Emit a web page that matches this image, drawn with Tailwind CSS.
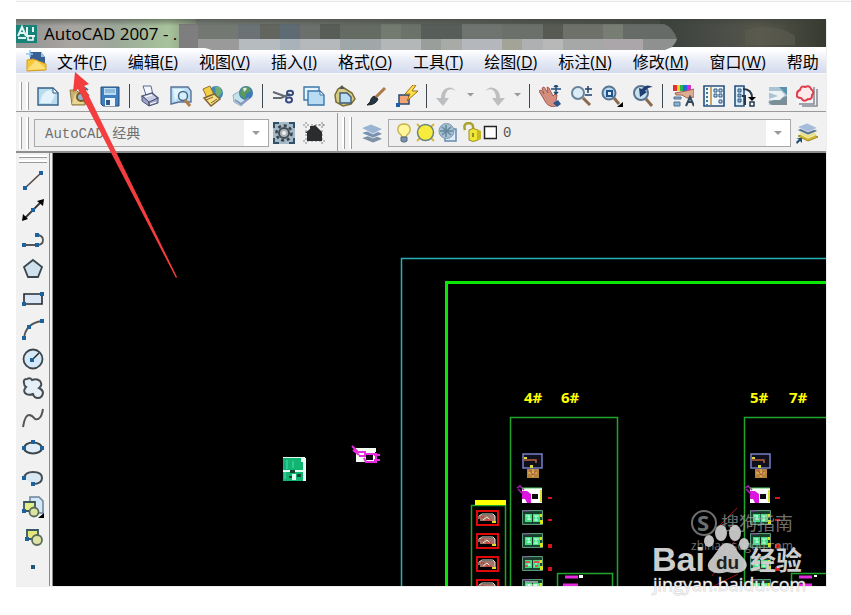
<!DOCTYPE html>
<html lang="zh-CN">
<head>
<meta charset="utf-8">
<meta name="viewport" content="width=device-width, initial-scale=1">
<title>AutoCAD 2007</title>
<script src="https://cdn.jsdelivr.net/npm/@tailwindcss/browser@4"></script>
</head>
<body class="bg-white">
<div class="flex h-screen min-h-[560px] flex-col overflow-hidden pl-4 font-['Open_Sans','Noto_Sans_CJK_SC',sans-serif] text-black">
<div class="h-0.5 shrink-0 border-b border-gray-200 bg-[#fafafa]"></div>

<main class="relative mt-[17px] mr-6 mb-7 flex min-h-0 flex-1 flex-col border-r border-b border-[#eeeeee] bg-[#f0f0f0]">

<!-- Title bar -->
<header class="relative flex h-[31px] shrink-0 items-center gap-2 overflow-hidden bg-linear-to-r from-[#8e9290] via-[#6a7068] via-40% to-[#343832] pb-px">
  <svg class="absolute inset-0 h-full w-[811px]" viewBox="16 19 811 31" aria-hidden="true">
    <defs>
      <linearGradient id="tb" x1="0" x2="1"><stop offset="0" stop-color="#8f9493"/><stop offset=".3" stop-color="#a9a4a0"/><stop offset=".55" stop-color="#9ca89a"/><stop offset=".85" stop-color="#a8c39b"/><stop offset="1" stop-color="#86907f"/></linearGradient>
      <linearGradient id="sh" x1="0" x2="0" y1="0" y2="1"><stop offset="0" stop-color="#3a4038" stop-opacity=".5"/><stop offset="1" stop-color="#3a4038" stop-opacity="0"/></linearGradient>
      <linearGradient id="dk" x1="0" x2="1"><stop offset="0" stop-color="#3b403c"/><stop offset=".35" stop-color="#4a4d47"/><stop offset=".6" stop-color="#55564a"/><stop offset="1" stop-color="#35392f"/></linearGradient>
    </defs>
    <path fill="url(#tb)" d="M16 19h180v31H16z"/>
    <path fill="url(#dk)" d="M660 19h167v31H660z"/>
    <path fill="#5e5e50" opacity=".6" d="M745 30q30-8 50 6v9h-50z"/>
    <path fill="#7d7e7d" d="M179 24h19v27h-19z"/>
    <path fill="#747873" d="M198 24h40v15h-40z"/><path fill="#999a99" d="M198 39h41v12h-41z"/>
    <path fill="#6b7275" d="M238 24h22v15h-22z"/><path fill="#62665f" d="M260 24h20v15h-20z"/><path fill="#5f6b74" d="M280 24h20v15h-20z"/><path fill="#6b706d" d="M300 24h20v15h-20z"/><path fill="#595d57" d="M320 24h20v15h-20z"/><path fill="#656a63" d="M340 24h41v15h-41z"/><path fill="#727b70" d="M381 24h20v15h-20z"/><path fill="#6c7169" d="M401 24h20v15h-20z"/><path fill="#575d59" d="M421 24h41v15h-41z"/><path fill="#707471" d="M462 24h40v15h-40z"/><path fill="#6c706b" d="M502 24h41v15h-41z"/><path fill="#565a52" d="M543 24h20v15h-20z"/><path fill="#6d716a" d="M563 24h40v15h-40z"/><path fill="#787d74" d="M603 24h20v15h-20z"/><path fill="#666b67" d="M623 24h41v15h-41z"/>
    <path fill="#b6bbc0" d="M239 39h41v12h-41z"/><path fill="#a9b2b8" d="M280 39h20v12h-20z"/><path fill="#b5b9bc" d="M300 39h40v12h-40z"/><path fill="#a0a7a9" d="M340 39h41v12h-41z"/><path fill="#b4b7b8" d="M381 39h40v12h-40z"/><path fill="#9a9e9b" d="M421 39h20v12h-20z"/><path fill="#a8aaa8" d="M441 39h21v12h-21z"/><path fill="#b4b8bc" d="M462 39h40v12h-40z"/><path fill="#a3a398" d="M502 39h20v12h-20z"/><path fill="#afb0b2" d="M522 39h21v12h-21z"/><path fill="#b9b8b8" d="M543 39h20v12h-20z"/><path fill="#a5a8a7" d="M563 39h40v12h-40z"/><path fill="#aaa6aa" d="M603 39h40v12h-40z"/><path fill="#8f9191" d="M643 39h34q-3 9-13 12h-21z"/>
    <path fill="url(#sh)" d="M16 19h811v7H16z"/>
    <path fill="#666b67" d="M664 24q9 3 13 15h-13z"/>
    <path fill="#fff" d="M16 48h189l7 2H16zM672 47h155v3H665z"/>
  </svg>
  <svg class="relative size-6 -mr-1" viewBox="0 0 24 24" aria-hidden="true"><path fill="#178278" d="M0 3h21v18H0z"/><path d="M2 14 6 5l4 9M4 11h5M11 5v9h8M17 5v5M2 16h8" stroke="#dff5f2" stroke-width="2" fill="none"/><path fill="#178278" stroke="#fff" stroke-width="1.5" d="M12 14h5v4h-5z"/></svg>
  <h1 class="relative text-[17px] leading-6">AutoCAD 2007 - .</h1>
</header>

<!-- Menu bar -->
<nav class="flex h-6 shrink-0 items-center gap-[21px] overflow-hidden bg-linear-to-b from-white via-[#e6eaf5] to-[#d5dbee] pl-2 text-base leading-6 whitespace-nowrap border-b border-[#f8f8f8]" aria-label="菜单">
  <svg class="-mr-3 size-6 shrink-0" viewBox="0 0 24 24" aria-hidden="true"><path fill="#385f94" d="M6 2h11l4 5v10H6z"/><path fill="#9fc2df" d="M17 2v5h4z"/><path fill="#f3c93a" stroke="#d69b1c" d="M3 10l6-1 13 5v6l-19 1z"/><path fill="#fbe07a" d="M3 20 12 10l10 9z"/><path stroke="#8cc7ee" stroke-width="1.5" d="M6 0v7M2 4h7"/></svg>
  <a href="#file">文件(<u>F</u>)</a><a href="#edit">编辑(<u>E</u>)</a><a href="#view">视图(<u>V</u>)</a><a href="#insert">插入(<u>I</u>)</a><a href="#format">格式(<u>O</u>)</a><a href="#tools">工具(<u>T</u>)</a><a href="#draw">绘图(<u>D</u>)</a><a href="#dim">标注(<u>N</u>)</a><a href="#modify">修改(<u>M</u>)</a><a href="#window">窗口(<u>W</u>)</a><a href="#help">帮助</a>
</nav>

<!-- Standard toolbar -->
<div class="flex h-[38px] shrink-0 items-center gap-[9px] overflow-hidden border-b border-[#9a9a9a] bg-[#f1f1f1] pt-1.5 pl-[3px] *:shrink-0" role="toolbar" aria-label="标准">
  <span class="flex h-7 gap-1 -mr-px"><i class="w-[3px] border-r border-[#9c9c9c] bg-white"></i><i class="w-[3px] border-r border-[#9c9c9c] bg-white"></i></span>
  <button aria-label="新建" class="size-[22px]"><svg viewBox="0 0 22 22"><path fill="#b9dcef" stroke="#365f86" stroke-width="1.4" d="M1 3h15l5 5v12H1z"/><path fill="#e4f3fb" d="M3 18Q4 7 13 5l5 5-4 8z"/><path fill="#f8fcff" stroke="#365f86" d="M16 3v5h5z"/></svg></button>
  <button aria-label="打开" class="size-[22px]"><svg viewBox="0 0 22 22"><path fill="#c9b173" stroke="#8d7a3f" d="M2 5h6l2 2h8l3 3-4 10H4z"/><path fill="#e9d68f" d="M7 9h13l-5 10H4z"/><path stroke="#4a7594" stroke-width="2" d="m10 4 4-3 6 4"/><circle cx="13" cy="12" r="4" fill="#8eb9cc" stroke="#765b28" stroke-width="2"/><path stroke="#6a5126" stroke-width="3" d="m16 15 4 4"/></svg></button>
  <button aria-label="保存" class="size-[22px]"><svg viewBox="0 0 22 22"><path fill="#3f7fbd" stroke="#274c78" d="M2 2h18v19H4l-2-2z"/><path fill="#b8dcf5" d="M5 3h12v7H5z"/><path stroke="#6699bb" d="M6 5h10M6 7h10"/><path fill="#eef5fa" d="M6 13h10v8H6z"/><path fill="#315a8b" d="M7 15h4v5H7z"/></svg></button>
  <i class="-ml-px h-6 w-px bg-[#3f4650]"></i>
  <button aria-label="打印" class="size-[22px]"><svg viewBox="0 0 22 22"><path fill="#f3f5ff" stroke="#606890" d="M4 1h8l2 9H7z"/><path fill="#c8cce5" stroke="#4b5273" stroke-width="1.3" d="m3 11 10-3 6 5-9 5z"/><path fill="#9da4c9" stroke="#4b5273" d="m3 11 7 6v4l-7-5zM10 17l9-4v5l-9 3z"/><path stroke="#fff" d="m6 12 7-2M11 19l6-2"/></svg></button>
  <button aria-label="打印预览" class="size-[22px]"><svg viewBox="0 0 22 22"><path fill="#b8dff6" stroke="#5b7198" stroke-width="1.4" d="M1 2h17l3 4v11H9l-8 2z"/><path fill="#e2f4fd" d="M3 4h12L5 16z"/><circle cx="13" cy="11" r="4.5" fill="#d5efff" stroke="#496689" stroke-width="1.5"/><path stroke="#b07c48" stroke-width="3" d="m15 15 5 6"/></svg></button>
  <button aria-label="发布" class="size-[22px]"><svg viewBox="0 0 22 22"><circle cx="15" cy="8" r="7" fill="#3c87bd"/><path fill="#71ae73" d="M14 2h5l2 5-4 6-2-4z"/><path fill="#f3cf46" stroke="#95742d" d="m2 4 7-3 4 9-7 3z"/><path fill="#f7e288" stroke="#826332" stroke-width="1.4" d="m3 13 10-4 6 5-9 7z"/><path stroke="#8b5c23" d="m5 15 7-3M10 18l6-4"/></svg></button>
  <button aria-label="三维 DWF" class="size-[22px]"><svg viewBox="0 0 22 22"><path fill="#c3e3ea" stroke="#8fb3c4" d="m1 10 7-4 10 7-9 8-7-4z"/><circle cx="14" cy="8" r="7" fill="#3b7cb8"/><path fill="#5d9a58" d="M9 4q7-6 10 2l-5 3-1 5-5-4z"/><path fill="#d7edf4" d="M11 3q3-1 4 1l-3 3z"/><path stroke="#8b92c0" stroke-width="2" fill="none" d="m3 15 6 4 8-6"/></svg></button>
  <i class="-ml-px h-6 w-px bg-[#3f4650]"></i>
  <button aria-label="剪切" class="size-[22px]"><svg viewBox="0 0 22 22" fill="none"><path stroke="#636a74" stroke-width="2" d="m1 7 14 5M1 13h8l9-4"/><ellipse cx="18" cy="8" rx="3" ry="2.3" stroke="#364b80" stroke-width="2"/><ellipse cx="17" cy="15" rx="3" ry="2.4" stroke="#364b80" stroke-width="2"/></svg></button>
  <button aria-label="复制" class="size-[22px]"><svg viewBox="0 0 22 22"><path fill="#e7f4ff" stroke="#3e77a9" stroke-width="1.4" d="M1 2h15v13H1z"/><path fill="#b8dcf3" stroke="#3e77a9" stroke-width="1.4" d="M5 6h12l4 4v10H5z"/><path fill="#fff" stroke="#3e77a9" d="M17 6v4h4z"/></svg></button>
  <button aria-label="粘贴" class="size-[22px]"><svg viewBox="0 0 22 22"><path fill="#d9cd83" stroke="#796f3d" stroke-width="1.5" d="M4 4 7 2l3 1 8 5 3 6-4 5-8 2-7-4-1-7z"/><path fill="#b9def1" stroke="#3f5877" stroke-width="1.4" d="M6 8h7l4 4v6H6z"/><path fill="#555" d="m5 4 3-4 3 4z"/></svg></button>
  <button aria-label="特性匹配" class="size-[22px]"><svg viewBox="0 0 22 22"><path stroke="#ad7948" stroke-width="3" d="M20 3 11 12"/><path fill="#29353e" stroke="#1c2932" d="m9 11 4 3q-2 6-11 6l3-3q1-5 4-6z"/></svg></button>
  <button aria-label="块编辑器" class="size-[22px]"><svg viewBox="0 0 22 22"><path fill="#f1a477" stroke="#284b70" stroke-width="1.5" d="M3 10h10v9H3z"/><path fill="#1b5daa" d="M0 18h4v4H0z"/><path fill="#ffe247" stroke="#a56d12" d="m17 0-8 9h5l-3 7L22 6h-6l4-6z"/></svg></button>
  <i class="-ml-px h-6 w-px bg-[#3f4650]"></i>
  <button aria-label="放弃" class="size-[22px]"><svg viewBox="0 0 22 22"><path fill="#bcbec0" d="M20 6Q15 0 9 4q-4 3-4 9H0l7 8 6-8H9q0-5 3-8 4-2 8 1z"/></svg></button>
  <button aria-label="放弃列表" class="w-[7px]"><svg viewBox="0 0 6 4"><path fill="#999" d="M0 0h6L3 3z"/></svg></button>
  <button aria-label="重做" class="size-[22px]"><svg viewBox="0 0 22 22"><path fill="#bcbec0" d="M2 6Q7 0 13 4q4 3 4 9h5l-7 8-6-8h4q0-5-3-8-4-2-8 1z"/></svg></button>
  <button aria-label="重做列表" class="w-[7px]"><svg viewBox="0 0 6 4"><path fill="#999" d="M0 0h6L3 3z"/></svg></button>
  <i class="-ml-px h-6 w-px bg-[#3f4650]"></i>
  <button aria-label="实时平移" class="size-[22px]"><svg viewBox="0 0 22 22"><path fill="#d58e7d" stroke="#a15d54" d="M0 6l2-1 3 4-2-6 2-1 4 6-1-6 2 1 4 8 2-2 2 1-1 6 3 3-5 3q-7-1-9-6z"/><path fill="#2a5689" d="m14 18 5-3 3 4-4 3z"/><path stroke="#224c7c" stroke-width="1.5" d="M17 0v9M12 4h10M15 2l2-2 2 2M15 7l2 2 2-2"/></svg></button>
  <button aria-label="实时缩放" class="size-[22px]"><svg viewBox="0 0 22 22"><circle cx="8" cy="8" r="6" fill="#dcecf6" stroke="#67849c" stroke-width="2"/><path stroke="#8b6a4d" stroke-width="3" d="m13 13 7 7"/><path stroke="#1f3f65" stroke-width="1.5" d="M18 1v7M15 4h7M15 10h7"/></svg></button>
  <button aria-label="窗口缩放" class="size-[22px]"><svg viewBox="0 0 22 22"><circle cx="8" cy="8" r="6.5" fill="#b8d9ee" stroke="#587491" stroke-width="2"/><path fill="#dcf0ff" stroke="#20538c" stroke-width="2" d="M6 6h5v5H6z"/><path stroke="#8b6a4d" stroke-width="3" d="m13 13 5 6"/><path d="M22 17v5h-6z"/></svg></button>
  <button aria-label="缩放上一个" class="size-[22px]"><svg viewBox="0 0 22 22"><circle cx="9" cy="8" r="7" fill="#c9e1ef" stroke="#587491" stroke-width="2"/><path stroke="#8b6a4d" stroke-width="3" d="m14 14 6 7"/><path fill="#203f70" d="M21 2q-7-4-11 2L7 3l1 9 7-5-2-1q3-4 8-4z"/></svg></button>
  <i class="-ml-px h-6 w-px bg-[#3f4650]"></i>
  <button aria-label="特性" class="size-[22px]"><svg viewBox="0 0 22 22"><path fill="#e42b37" d="M1 0h4v6H1z"/><path fill="#f0d126" d="M5 0h3v6H5z"/><path fill="#25b44d" d="M8 0h3v6H8z"/><path fill="#2466df" d="M11 0h4v6h-4z"/><path fill="#d62bd2" d="M15 0h4v6h-4z"/><path fill="#dfab91" stroke="#9b6250" d="m3 8 11-2 8-2v8l-7 1-5-3H4z"/><path fill="#89b0d5" stroke="#4f7294" d="M2 12h7v2H2zm0 5h6v4H2z"/><path stroke="#34485e" stroke-width="2" fill="none" d="m14 21 4-9 4 9m-6-4h5"/></svg></button>
  <button aria-label="设计中心" class="size-[22px]"><svg viewBox="0 0 22 22"><path fill="#eef7fd" stroke="#28517a" stroke-width="1.6" d="M1 1h20v20H1z"/><path stroke="#c8a85d" stroke-width="2" d="M8 2v18"/><path stroke="#4a7797" stroke-width="2" stroke-dasharray="2 2" d="M4 3v17"/><path fill="#bdd5ea" stroke="#31587e" d="M11 4h3v3h-3zm5 0h3v3h-3zm-5 5h3v3h-3zm5 0h3v3h-3zm0 6h3v3h-3z"/></svg></button>
  <button aria-label="工具选项板" class="size-[22px]"><svg viewBox="0 0 22 22"><path fill="#d9eafa" stroke="#28517a" stroke-width="1.6" d="M1 1h9v20H1z"/><path fill="#8eb5d5" stroke="#31587e" d="M4 4h3v3H4zm0 5h3v3H4zm0 5h3v3H4z"/><path fill="none" stroke="#23384d" stroke-width="2" d="M9 4q9 0 9 9M8 11h3v9"/><path d="m14 12 4 4 4-4z"/><path fill="#fff" stroke="#23384d" stroke-width="1.5" d="M16 17h4v4h-4z"/></svg></button>
  <button aria-label="图纸集管理器" class="size-[22px]"><svg viewBox="0 0 22 22"><path fill="#a9c5d3" d="M4 2h18v18H4z"/><path fill="#7b8f99" d="m3 17 19-6v9H7z"/><path fill="#edf3f4" d="M0 6h16l4 4-5 5H1l12-4z"/><path fill="#5a8fb0" d="M14 2h8v8z"/></svg></button>
  <button aria-label="标记集管理器" class="size-[22px]"><svg viewBox="0 0 22 22"><path fill="none" stroke="#838b93" stroke-width="1.5" d="M6 21h15V4M3 19h15V2"/><path fill="#f2f8fb" d="M1 2h15v15H1z"/><path fill="#fce9e9" stroke="#df3e4c" stroke-width="2" d="M4 5q1-5 5-3 5-2 6 2 4 3 1 6 0 5-4 4-4 4-7-1-5 0-4-4 0-3 3-4z"/></svg></button>
</div>

<!-- Workspace and layer toolbar -->
<div class="flex h-[41px] shrink-0 items-center gap-2 overflow-hidden border-b-2 border-[#8d8d8d] bg-[#f1f1f1] pt-[3px] pl-[3px]" role="toolbar" aria-label="图层">
  <span class="-mr-[3px] flex h-8 shrink-0 gap-1"><i class="w-[3px] border-r border-[#9c9c9c] bg-white"></i><i class="w-[3px] border-r border-[#9c9c9c] bg-white"></i></span>
  <div class="relative h-7 w-[235px] shrink-0 border border-[#a8a8a8] bg-[#efefef]">
    <select aria-label="工作空间" class="size-full appearance-none bg-transparent pl-2.5 font-['Liberation_Mono','Noto_Sans_CJK_SC',monospace] text-sm text-[#707070]"><option>AutoCAD 经典</option></select>
    <span class="pointer-events-none absolute inset-y-0 right-0 flex w-6 items-center justify-center bg-white"><svg class="w-2" viewBox="0 0 8 4" aria-hidden="true"><path fill="#999" d="M0 0h8L4 4z"/></svg></span>
  </div>
  <button aria-label="工作空间设置" class="-ml-1 size-[22px] shrink-0"><svg viewBox="0 0 22 22"><path fill="#a5b8c6" d="M0 0h22v22H0z"/><path fill="none" stroke="#31516a" stroke-width="2" d="M6 1H1v5M16 1h5v5M1 16v5h5M21 16v5h-5"/><circle cx="11" cy="11" r="7.5" fill="none" stroke="#38424b" stroke-width="2.5" stroke-dasharray="3 2.8"/><circle cx="11" cy="11" r="5" fill="#adb4b8" stroke="#424c54" stroke-width="2"/><circle cx="11" cy="11" r="2" fill="#eee"/></svg></button>
  <button aria-label="我的工作空间" class="size-[22px] shrink-0"><svg viewBox="0 0 22 22"><path stroke="#868686" stroke-dasharray="2 2" d="M0 3h22M0 19h22M3 0v22M19 0v22M15 3h7"/><path fill="#2a2c2e" d="m2 11 5-4V4h3l2-1 7 7v9H4v-8z"/></svg></button>
  <i class="ml-1 h-10 w-px shrink-0 bg-[#9a9a9a]"></i>
  <span class="-ml-1 flex h-8 shrink-0 gap-1"><i class="w-[3px] border-r border-[#9c9c9c] bg-white"></i><i class="w-[3px] border-r border-[#9c9c9c] bg-white"></i></span>
  <button aria-label="图层特性管理器" class="size-6 shrink-0"><svg viewBox="0 0 24 24"><path fill="#7e91a4" stroke="#fff" stroke-width=".7" d="m1 17 12-4 10 5-10 4z"/><path fill="#7791ae" stroke="#fff" stroke-width=".7" d="m1 12 12-4 10 5-10 4z"/><path fill="#9ab4d2" stroke="#fff" stroke-width=".7" d="M1 7 11 3l12 5-10 5z"/></svg></button>
  <div class="-ml-1 relative flex h-7 min-w-0 flex-1 items-center border border-[#a8a8a8] bg-[#efefef] pl-1">
    <svg class="h-[22px] w-[104px] shrink-0" viewBox="392 123 104 22" aria-hidden="true">
      <path fill="#fff59b" stroke="#c4b34c" stroke-width="1.4" d="M400 136q-4-3-3-7 1-4 6-4t6 4q1 4-3 7l-1 2h-4z"/><path fill="#7890ad" stroke="#57697c" d="M400 138h6v4l-2 1h-2l-2-1z"/>
      <path stroke="#d6b83b" stroke-width="2" d="m416 125 17 17M433 125l-17 17"/><circle cx="424.500" cy="133.500" r="8" fill="#f7ec3b" stroke="#6a847c" stroke-width="1.5"/>
      <path fill="#dfeafa" stroke="#658aae" stroke-width="1.5" d="M444 130h11v12h-11z"/><circle cx="445.500" cy="132" r="7.500" fill="#a7bfd0" stroke="#789aae"/><path stroke="#62879e" stroke-width="1.5" d="M445 126v12M439 132h13M441 128l9 8M450 128l-9 8"/>
      <path fill="none" stroke="#a8a22c" stroke-width="2.500" d="M464 131q-2-6 3-7 6 0 5 6v5"/><path fill="#efe438" stroke="#989024" d="M468 131q4-3 9 0v10q-5 3-9 0z"/><path fill="#c6b923" d="M476 130l4 2v8l-4 2z"/><path stroke="#77701c" stroke-width="1.500" d="M472 134v4"/>
      <path fill="#fff" stroke="#222" stroke-width="1.500" d="M483.500 127.500h12v12h-12z"/>
    </svg>
    <select aria-label="当前图层" class="h-full min-w-0 flex-1 appearance-none bg-transparent pl-1.5 font-['Liberation_Mono',monospace] text-sm text-[#555]"><option>0</option></select>
    <span class="pointer-events-none absolute inset-y-0 right-0 flex w-6 items-center justify-center bg-white"><svg class="w-2" viewBox="0 0 8 4" aria-hidden="true"><path fill="#999" d="M0 0h8L4 4z"/></svg></span>
  </div>
  <button aria-label="将对象的图层置为当前" class="-ml-1 mr-[7px] size-6 shrink-0"><svg viewBox="0 0 24 24"><path fill="#d4b92c" stroke="#9c8a28" d="m3 15 10-4 10 5-10 4z"/><path fill="#ece179" stroke="#fff" stroke-width=".6" d="m3 12 10-4 10 5-10 4z"/><path fill="#54728d" stroke="#fff" stroke-width=".6" d="m2 9 10-4 11 5-10 4z"/><path fill="#a7bcda" stroke="#fff" stroke-width=".6" d="M2 6 12 2l11 5-10 4z"/><path fill="#204d78" d="M1 17h6v5l-2-2-3 3-1-2 3-3z"/></svg></button>
</div>

<div class="flex min-h-0 flex-1">
<!-- Draw toolbar -->
<aside class="flex w-[37px] shrink-0 flex-col items-center border-r-4 border-double border-[#8b8b8b] bg-[#f1f1f1] pt-0.5 pb-2" role="toolbar" aria-label="绘图">
  <div class="flex w-7 flex-col gap-0.5"><i class="h-[3px] border-b border-[#999] bg-white"></i><i class="h-[3px] border-b border-[#999] bg-white"></i></div>
  <div class="mt-1.5 flex min-h-0 flex-1 flex-col justify-between *:size-[22px]">
  <button aria-label="直线"><svg viewBox="0 0 22 22"><path stroke="#554b44" stroke-width="1.6" d="M3 19 19 4"/><path fill="#1d629c" d="M1 17h4v4H1zM17 2h4v4h-4z"/></svg></button>
  <button aria-label="构造线"><svg viewBox="0 0 22 22"><path stroke="#333" stroke-width="1.8" d="M2 20 20 2"/><path d="m0 22 1-7 5 5zM22 0l-1 7-6-5z"/><path fill="#1d629c" d="M9 9h4v4H9z"/></svg></button>
  <button aria-label="多段线"><svg viewBox="0 0 22 22"><path fill="none" stroke="#555" stroke-width="1.8" d="M2 16h13q6 0 6-5t-7-5"/><path fill="#1d629c" d="M0 14h4v4H0zM13 14h4v4h-4zM13 4h4v4h-4z"/></svg></button>
  <button aria-label="正多边形"><svg viewBox="0 0 22 22"><path fill="#cfe1ec" stroke="#3b454c" stroke-width="1.8" d="m11 2 9 7-4 10H6L2 9z"/></svg></button>
  <button aria-label="矩形"><svg viewBox="0 0 22 22"><path fill="#dce7f5" stroke="#252a30" stroke-width="1.6" d="M2 6h18v10H2z"/><path fill="#1d629c" d="M0 14h4v4H0zM18 4h4v4h-4z"/></svg></button>
  <button aria-label="圆弧"><svg viewBox="0 0 22 22"><path fill="none" stroke="#555" stroke-width="1.8" d="M2 20Q4 5 20 3"/><path fill="#1d629c" d="M0 18h4v4H0zM5 7h4v4H5zM18 1h4v4h-4z"/></svg></button>
  <button aria-label="圆"><svg viewBox="0 0 22 22"><circle cx="11" cy="11" r="9.500" fill="#d5e8f9" stroke="#3b454c" stroke-width="1.8"/><path stroke="#222" stroke-width="1.500" d="m10 12 7-7"/><path fill="#1d629c" d="M8 10h4v4H8z"/></svg></button>
  <button aria-label="修订云线"><svg viewBox="0 0 22 22"><path fill="#e5eff7" stroke="#454d53" stroke-width="2" d="M2 6q-1-4 3-4 3-2 5 1 5-2 8 1 3 4-1 7 4 2 4 5-1 5-5 5-4 0-5-4-5 2-8-1-2-3 1-6-2-1-2-4z"/></svg></button>
  <button aria-label="样条曲线"><svg viewBox="0 0 22 22"><path fill="none" stroke="#555" stroke-width="2" d="M1 20Q3 8 7 8q3 0 6 4 6 2 8-10"/></svg></button>
  <button aria-label="椭圆"><svg viewBox="0 0 22 22"><ellipse cx="11" cy="11" rx="9" ry="5.500" fill="#e1edf6" stroke="#3b454c" stroke-width="2"/><path fill="#1d629c" d="M0 9h4v4H0zM18 9h4v4h-4zM9 3h4v4H9z"/></svg></button>
  <button aria-label="椭圆弧"><svg viewBox="0 0 22 22"><path fill="#d8e9f4" stroke="#454d53" stroke-width="2" d="M2 11Q3 5 11 5q9 0 9 6t-9 6"/><path fill="#1d629c" d="M0 9h4v4H0zM9 15h4v4H9z"/></svg></button>
  <button aria-label="插入块"><svg viewBox="0 0 22 22"><path fill="#d4e7f7" stroke="#688299" stroke-width="1.500" d="M8 1h9l4 4v12H8z"/><path fill="#e4ee86" stroke="#385664" stroke-width="1.8" d="M2 6h11v9H2z"/><circle cx="12" cy="16" r="4.500" fill="#dce5a2" stroke="#5b6c5b" stroke-width="1.8"/><path fill="#1d629c" d="M0 13h4v4H0z"/><path d="M22 17v5h-6z"/></svg></button>
  <button aria-label="创建块"><svg viewBox="0 0 22 22"><path fill="#e6e779" stroke="#385664" stroke-width="1.8" d="M5 4h11v9H5z"/><circle cx="15" cy="14" r="5" fill="#dce3a5" stroke="#5b6c5b" stroke-width="1.8"/><path fill="#1d629c" d="M3 11h4v4H3z"/></svg></button>
  <button aria-label="点"><svg viewBox="0 0 22 22"><path fill="#1e5878" d="M9 9h4v4H9z"/></svg></button>
  </div>
</aside>

<!-- Model space -->
<section class="min-w-0 flex-1 overflow-hidden bg-black" aria-label="模型空间">
<svg class="h-[433px] w-[774px]" viewBox="53 153 774 433" fill="none" font-family="Open Sans, sans-serif">
  <defs>
    <g id="sheet"><path fill="#1c4634" stroke="#5c9a7c" d="M.5.500h20v14H.5z"/><path fill="#3fe07f" d="M3 4h7v8H3zm8 0h7v8h-7z"/><path stroke="#c9ffe0" d="M4 6h4m-3 3h4m3-3h5m-5 4h4M7 5v5m7-4v5"/><path stroke="#123325" d="M1 3h18M10.500 3v10"/><path fill="#d9e51d" d="M18 4h2v3h-2zm0 6h3v4h-3z"/><path stroke="#8c35a0" d="M1 1h6"/></g>
    <g id="red"><path stroke="#e10808" stroke-width="2" d="M1 1h21v14H1z"/><path fill="#a47167" d="M4 5h15v6H4z"/><path stroke="#e8e4d8" d="M3 9V6l3-2h11l2 2v5M7 10l4-3 3 3"/><path stroke="#db2016" d="M5 7h3m2 3h5"/><path fill="#eadc24" d="M16 11h4v2h-4z"/></g>
    <g id="block"><path fill="#10101d" stroke="#767fc7" stroke-width="1.500" d="M1 1h19v14H1z"/><path stroke="#b7623d" stroke-width="1.500" d="M2 7h12v3"/><path fill="#d8d841" d="M2 4h3v2H2zm6 8h3v3H8z"/><path fill="#b5833b" d="M5 16h12v9H5z"/><path stroke="#e5c259" d="M6 20h9m-4-4v8"/><path stroke="#b34950" d="m8 17 3 5 3-4"/></g>
    <g id="plan"><path fill="#fff" d="M1 0h20v15H1z"/><path fill="#0a0a0a" d="M11 6h6v5h-6z"/><path fill="#dd16dd" d="M1 3h5l4 3v9H6l-2-4H1z"/><path stroke="#b519bd" stroke-width="1.500" d="m-4 0 3-2 4 4m-6-1 5 5"/><path stroke="#d7df33" stroke-width="2" d="M20 2v12"/><path stroke="#4ecb56" d="M1 0h20"/></g>
  </defs>
  <path stroke="#28aeb5" stroke-width="1.500" d="M401.500 586V258.500H827"/>
  <path stroke="#08e708" stroke-width="3" d="M446.500 586V282.500H827"/>
  <path stroke="#20a52b" stroke-width="1.500" d="M510.500 586V417.500h107V586M744.500 586V417.500H827M471.500 586v-80.500h34V586M557.500 586v-12.500h55V586M791.500 586v-12.500H827"/>
  <path fill="#ff0" d="M475 500h31v5h-31z"/>
  <g fill="#ff0" font-size="15" font-weight="700"><text x="524" y="403">4#</text><text x="561" y="403">6#</text><text x="750" y="403">5#</text><text x="789" y="403">7#</text></g>
  <use href="#block" x="522" y="453"/><use href="#block" x="750" y="453"/>
  <use href="#plan" x="521" y="488"/><use href="#plan" x="749" y="488"/>
  <use href="#sheet" x="522" y="510"/><use href="#sheet" x="750" y="510"/><use href="#sheet" x="522" y="533"/><use href="#sheet" x="750" y="533"/><use href="#sheet" x="522" y="556"/><use href="#sheet" x="750" y="556"/><use href="#sheet" x="522" y="579"/><use href="#sheet" x="750" y="579"/>
  <path stroke="#e05050" stroke-width="2" d="M525 562h5m4 0h5m-14 4h3m7 0h3"/><path stroke="#fff" d="M525 582h13m-10 3h9"/>
  <use href="#red" x="476" y="510"/><use href="#red" x="476" y="533"/><use href="#red" x="476" y="556"/><use href="#red" x="476" y="579"/>
  <path fill="#d51518" d="M548 497h4v2h-4zm0 22h4v2h-4zm0 25h4v4h-4zm0 23h4v4h-4zM775 497h5v2h-5zm0 22h5v2h-5zm0 25h5v4h-5zm0 23h5v4h-5z"/>
  <path stroke="#e52be0" stroke-width="3" d="M565 577h13m-15 8h15M799 577h13m-13 8h13"/><path fill="#fff" d="M579 575h4v3h-4zm235 0h3v2h-3z"/>
  <path fill="#11b570" d="M283 458h23v23h-23z"/><path fill="#e3fff1" d="M301 458h5v23h-3v-19h-2zM283 470h20v2h-20zM283 457h22v1h-22zM292 474h4v6h-4z"/><path fill="#164633" d="M290 470h5v3h-5zM297 474h4v3h-4zM289 476h3v2h-3z"/><path stroke="#50d8d0" d="M287 460v9m6-8v7m-8 4v7"/>
  <path fill="#f5fff1" d="M356 448h20v14h-20z"/><path fill="#120812" d="M368 454h5v6h-5zM375 452h2v10h-2z"/><path stroke="#e82be2" stroke-width="2" d="m352 446 7 7m-6-3 6 5m0-3h6v4h-6m5-2h12v8h-10l-2-4M374 455h6m-6 5h6"/><path fill="#120812" d="M366 455h7v5h-7z"/>
  <path stroke="#a51117" d="m720 525 17-17M712 576l18-29 7-9M714 586l24-12"/>
</svg>
</section>
</div>

<!-- Pointer arrow and site marks laid over the window -->
<svg class="pointer-events-none absolute top-0 left-0 h-[568px] w-[811px] overflow-visible" viewBox="16 19 811 568" aria-hidden="true">
  <path fill="#f43d3f" d="m75 72 14 12-5 2 93 191-1 1L78 89l-5 3z"/>
  <g fill="#aaa" font-family="Open Sans, Noto Sans CJK SC, sans-serif" opacity=".65"><circle cx="704" cy="523" r="12" fill="none" stroke="#aaa" stroke-width="2"/><text x="697" y="531" font-size="22" font-weight="700">S</text><text x="721" y="530" font-size="18">搜狗指南</text><text x="691" y="550" font-size="12">zhinan.sogou.com</text></g>
  <g fill="#cdcdcd" opacity=".94"><ellipse cx="709" cy="541" rx="5" ry="6"/><ellipse cx="721" cy="533" rx="6" ry="8"/><ellipse cx="735" cy="533" rx="6" ry="8"/><ellipse cx="744" cy="544" rx="5" ry="6"/><path d="M727 543q7 0 11 9l7 8q5 8-4 12-5 2-14 0-11 3-16-1-7-5 1-13l6-8q4-7 9-7z"/></g>
  <g fill="#cdcdcd" font-family="Liberation Sans, Noto Sans CJK SC, sans-serif" font-weight="700"><text x="652" y="571" font-size="34">Bai</text><text x="716" y="569" font-size="19" fill="#202020">du</text><text x="750" y="570" font-size="26">经验</text></g>
  <text x="653" y="591" font-size="18" font-family="Open Sans, sans-serif" fill="#f1f1f1" stroke="#a9a9a9" stroke-opacity=".5" stroke-width="1" paint-order="stroke">jingyan.baidu.com</text>
</svg>
</main>
</div>
</body>
</html>
